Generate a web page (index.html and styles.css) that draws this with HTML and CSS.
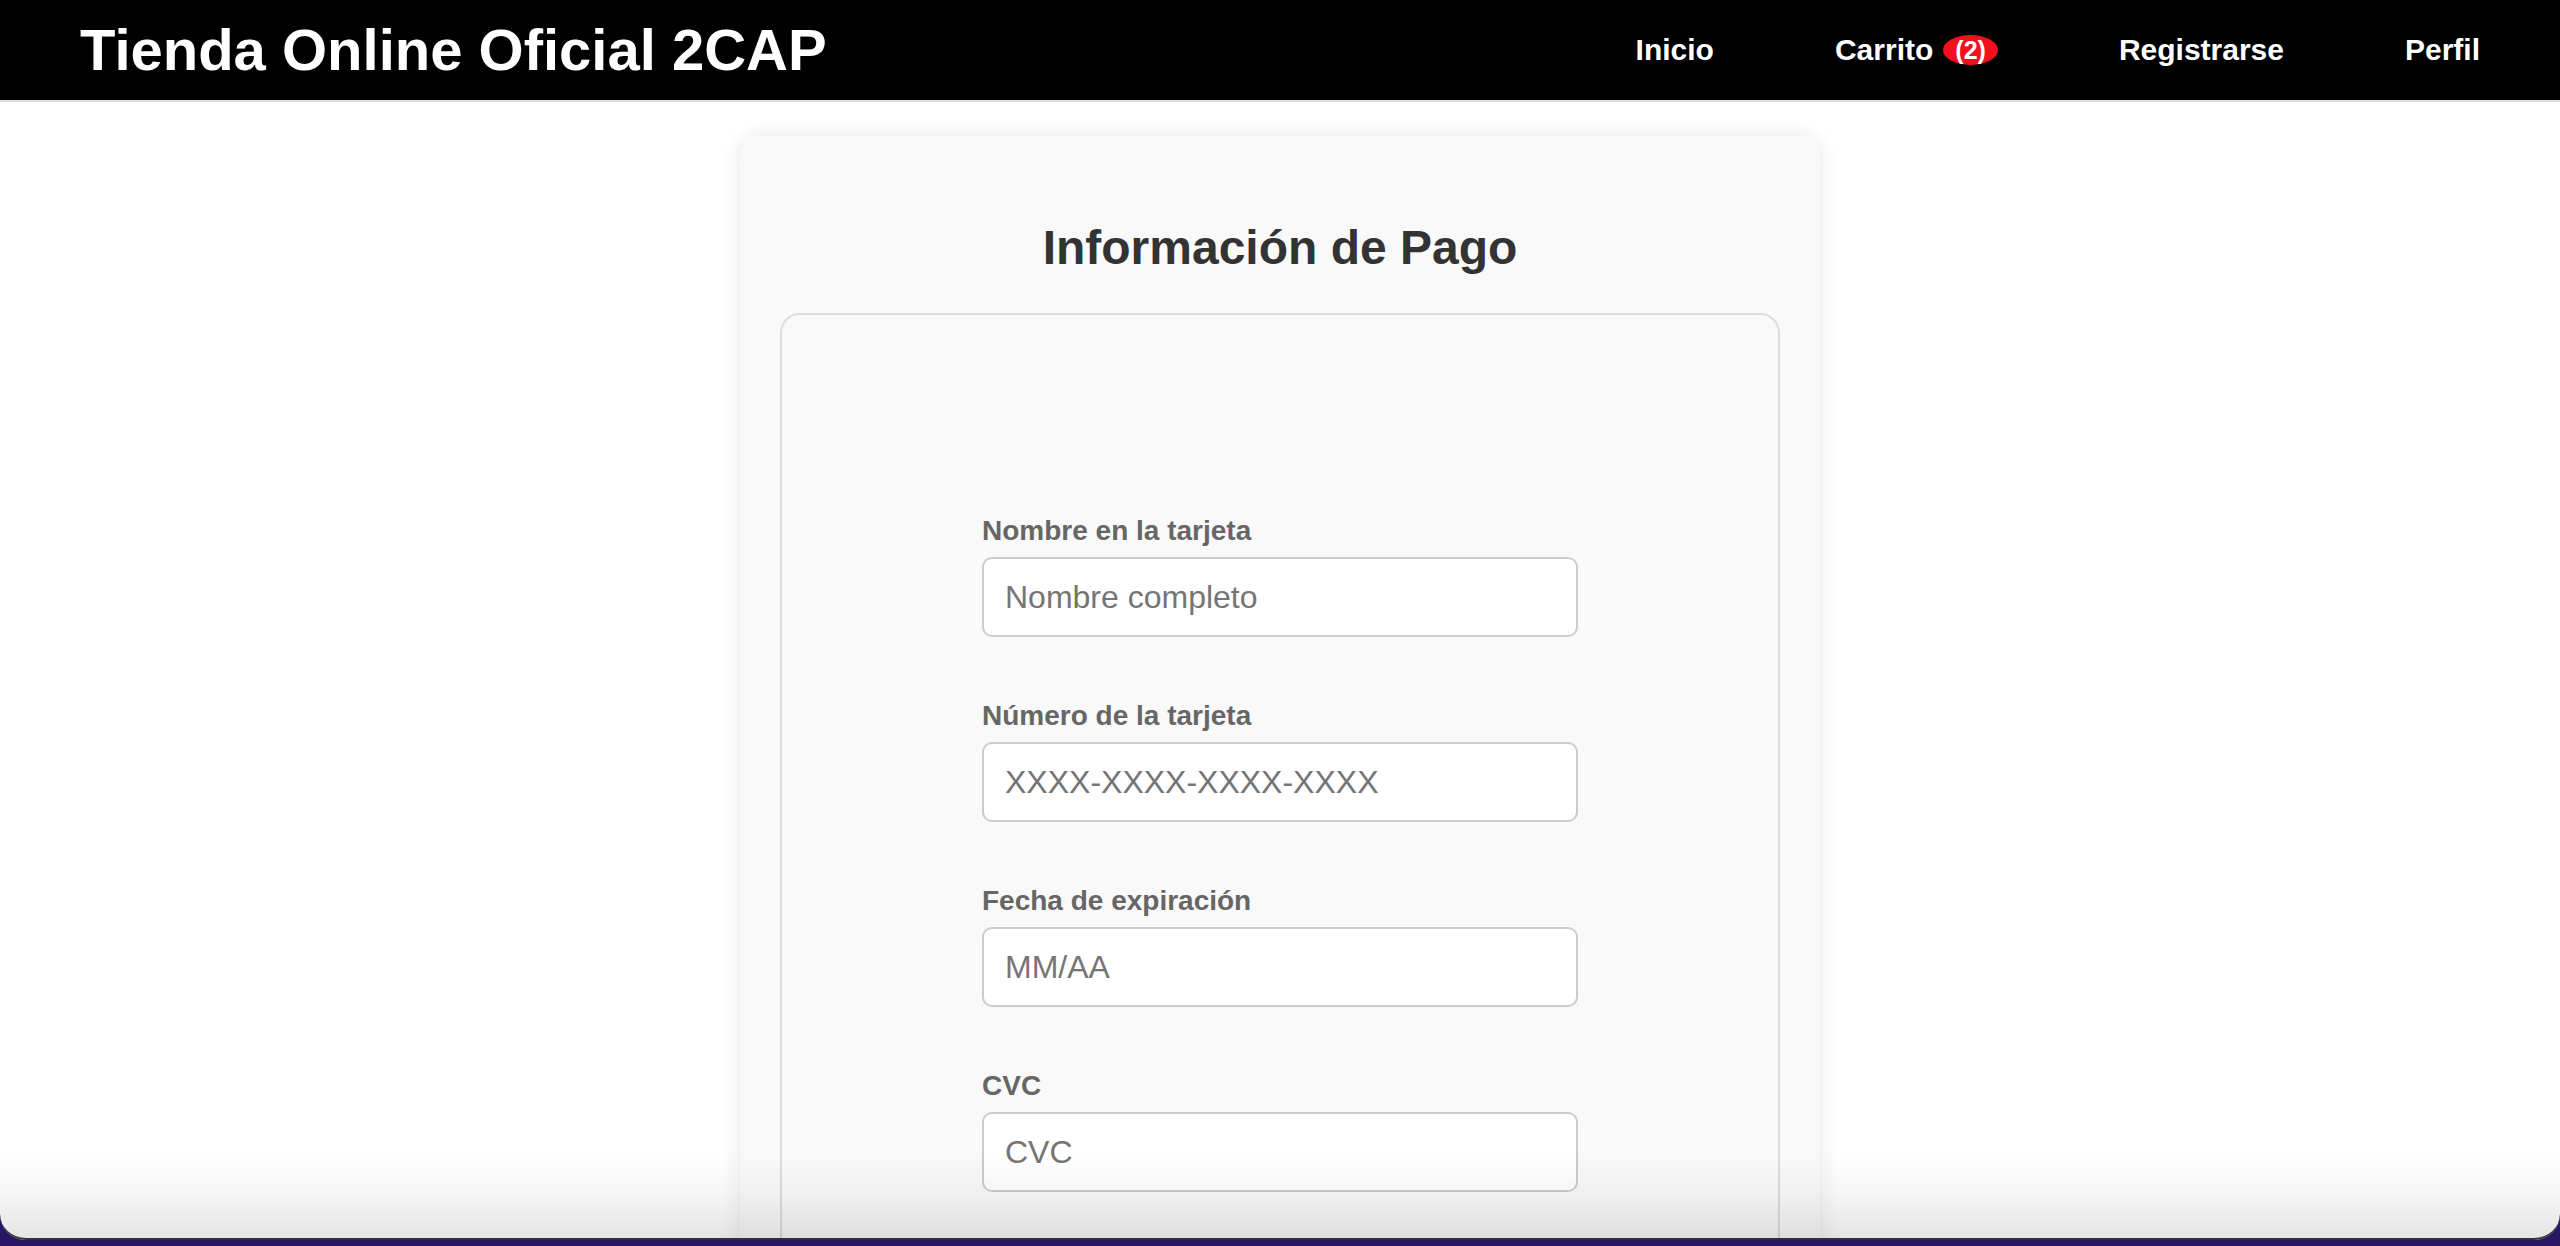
FILE: index.html
```html
<!DOCTYPE html>
<html lang="es">
<head>
<meta charset="utf-8">
<title>Tienda Online Oficial 2CAP - Pago</title>
<link rel="stylesheet" href="styles.css">
</head>
<body>
<header class="topbar">
  <h1 class="brand">Tienda Online Oficial 2CAP</h1>
  <nav class="menu">
    <a class="menu-link" href="#">Inicio</a>
    <a class="menu-link" href="#">Carrito<span class="badge">(2)</span></a>
    <a class="menu-link" href="#">Registrarse</a>
    <a class="menu-link" href="#">Perfil</a>
  </nav>
</header>

<main class="page">
  <section class="card">
    <h2 class="card-title">Información de Pago</h2>
    <div class="payment-box">
      <form class="payment-form">
        <div class="field">
          <label class="field-label" for="nombre">Nombre en la tarjeta</label>
          <input class="field-input" id="nombre" type="text" placeholder="Nombre completo">
        </div>
        <div class="field">
          <label class="field-label" for="numero">Número de la tarjeta</label>
          <input class="field-input" id="numero" type="text" placeholder="XXXX-XXXX-XXXX-XXXX">
        </div>
        <div class="field">
          <label class="field-label" for="fecha">Fecha de expiración</label>
          <input class="field-input" id="fecha" type="text" placeholder="MM/AA">
        </div>
        <div class="field">
          <label class="field-label" for="cvc">CVC</label>
          <input class="field-input" id="cvc" type="text" placeholder="CVC">
        </div>
      </form>
    </div>
  </section>
</main>

<div class="window-fade"></div>
<div class="window-frame"></div>
</body>
</html>
```

FILE: styles.css
```css
html, body {
  margin: 0;
  padding: 0;
}

body {
  background: #ffffff;
  font-family: "Liberation Sans", Arial, Helvetica, sans-serif;
  color: #333333;
}

/* ---------- top bar ---------- */
.topbar {
  display: flex;
  align-items: center;
  justify-content: space-between;
  height: 100px;
  padding: 0 80px 0 80px;
  background: #000000;
  border-bottom: 2px solid #dddddd;
}

.brand {
  margin: 0;
  font-size: 58px;
  font-weight: bold;
  color: #ffffff;
  line-height: 1;
}

.menu {
  display: flex;
  align-items: center;
  gap: 121px;
}

.menu-link {
  display: flex;
  align-items: center;
  color: #ffffff;
  font-size: 30px;
  font-weight: bold;
  text-decoration: none;
}

.badge {
  margin-left: 10px;
  padding: 1px 12px;
  border-radius: 50%;
  background: #f2101f;
  color: #ffffff;
  font-size: 25px;
  font-weight: bold;
  line-height: 28px;
}

/* ---------- card ---------- */
.page {
  padding-top: 34px;
}

.card {
  box-sizing: border-box;
  width: 1080px;
  margin: 0 auto;
  padding: 40px 40px 40px;
  background: #f9f9f9;
  border-radius: 20px;
  box-shadow: 0 0 20px rgba(0, 0, 0, 0.1);
}

.card-title {
  margin: 44px 0 38px;
  text-align: center;
  font-size: 48px;
  font-weight: bold;
  color: #333333;
}

.payment-box {
  padding: 200px 0 60px;
  border: 2px solid #dddddd;
  border-radius: 20px;
}

.payment-form {
  width: 596px;
  margin: 0 auto;
}

.field {
  margin-bottom: 63px;
}

.field-label {
  display: block;
  margin-bottom: 10px;
  font-size: 28px;
  font-weight: bold;
  color: #666666;
}

.field-input {
  display: block;
  box-sizing: border-box;
  width: 596px;
  height: 80px;
  padding: 0 21px;
  border: 2px solid #cccccc;
  border-radius: 10px;
  background: #ffffff;
  font-family: "Liberation Sans", Arial, Helvetica, sans-serif;
  font-size: 32px;
  color: #333333;
  outline: none;
}

.field-input::placeholder {
  color: #757575;
}

/* ---------- window chrome of the screenshot ---------- */
.window-fade {
  position: fixed;
  left: 0;
  right: 0;
  bottom: 8px;
  height: 86px;
  background: linear-gradient(to bottom, rgba(0, 0, 0, 0) 0%, rgba(0, 0, 0, 0.03) 45%, rgba(0, 0, 0, 0.1) 100%);
  pointer-events: none;
}

.window-frame {
  position: fixed;
  top: -40px;
  left: 0;
  right: 0;
  bottom: 6px;
  border-bottom: 2px solid #323232;
  border-radius: 0 0 26px 26px;
  box-shadow: 0 0 0 40px #2a1663;
  pointer-events: none;
}
```
